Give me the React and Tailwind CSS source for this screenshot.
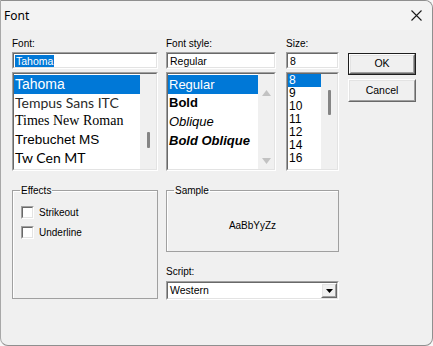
import React from "react";

const outerSunk = "border border-t-[#a0a0a0] border-l-[#a0a0a0] border-r-white border-b-white";
const innerSunk = "border border-t-[#696969] border-l-[#696969] border-r-[#e3e3e3] border-b-[#e3e3e3]";
const outerRaised = "border border-t-white border-l-white border-r-[#696969] border-b-[#696969]";
const innerRaised = "border border-t-[#e3e3e3] border-l-[#e3e3e3] border-r-[#a0a0a0] border-b-[#a0a0a0]";

function Sunken({ className = "", inner = "", children }) {
  return (
    <div className={`${outerSunk} ${className}`}>
      <div className={`${innerSunk} h-full w-full bg-white ${inner}`}>{children}</div>
    </div>
  );
}

function Label({ children }) {
  return <div className="h-[13px] text-[10px] leading-[13px] text-black">{children}</div>;
}

function ThinScroll({ top, height }) {
  return (
    <div className="w-[16px] h-full bg-[#f0f0f0] flex flex-col items-center">
      <div style={{ marginTop: top, height }} className="w-[3px] bg-[#858585] rounded-[1px]" />
    </div>
  );
}

function Checkbox({ label }) {
  return (
    <div className="flex items-center h-[16px]">
      <div className={`${outerSunk} w-[13px] h-[13px]`}>
        <div className={`${innerSunk} w-full h-full bg-white`} />
      </div>
      <span className="ml-[5px] text-[10px] leading-[13px]">{label}</span>
    </div>
  );
}

export default function App() {
  const fonts = [
    { name: "Tahoma", cls: "font-['Liberation_Sans',sans-serif] text-[14px]", sel: true },
    { name: "Tempus Sans ITC", cls: "font-['Lato',sans-serif] text-[14px] text-[#2a2a2a]" },
    { name: "Times New Roman", cls: "font-['Liberation_Serif',serif] text-[14px]" },
    { name: "Trebuchet MS", cls: "font-['Liberation_Sans',sans-serif] text-[13.5px]" },
    { name: "Tw Cen MT", cls: "font-['Lato',sans-serif] text-[14px]" },
  ];
  const styles = [
    { name: "Regular", cls: "", sel: true },
    { name: "Bold", cls: "font-bold" },
    { name: "Oblique", cls: "italic" },
    { name: "Bold Oblique", cls: "font-bold italic" },
  ];
  const sizes = ["8", "9", "10", "11", "12", "14", "16"];

  return (
    <div className="w-[433px] h-[346px] bg-[#f7f7f7] font-['Liberation_Sans',Arial,sans-serif] text-black">
      <div className="w-[433px] h-[346px] bg-[#f0f0f0] border border-[#8f8f8f] border-l-[#a8a8a8] rounded-tr-[8px] rounded-b-[8px] flex flex-col overflow-hidden">
        {/* Title bar */}
        <div className="h-[29px] shrink-0 flex items-center justify-between pl-[3px] pr-[10px] bg-[#f3f3f3]">
          <span className="font-['Noto_Sans',sans-serif] text-[12px] leading-[16px] text-black">Font</span>
          <svg width="11" height="11" viewBox="0 0 11 11">
            <path d="M0.5 0.5 L10.5 10.5 M10.5 0.5 L0.5 10.5" stroke="#1a1a1a" strokeWidth="1.1" />
          </svg>
        </div>

        {/* Body */}
        <div className="flex-1 flex flex-col pl-[11px] pt-[7px]">
          {/* Top row */}
          <div className="flex">
            {/* Font column */}
            <div className="w-[146px] flex flex-col">
              <Label>Font:</Label>
              <Sunken className="mt-[2px] h-[17px]" inner="flex items-center pl-[1px]">
                <span className="bg-[#0078d7] text-white text-[10.5px] leading-[12px] px-[1px]">Tahoma</span>
              </Sunken>
              <Sunken className="mt-[3px] h-[99px]" inner="flex overflow-hidden">
                <div className="flex-1 pt-[1px] flex flex-col">
                  {fonts.map((f) => (
                    <div
                      key={f.name}
                      className={`h-[18.5px] shrink-0 flex items-center pl-[1px] leading-[18px] whitespace-nowrap ${f.cls} ${f.sel ? "bg-[#0078d7] text-white" : ""}`}
                    >
                      {f.name}
                    </div>
                  ))}
                </div>
                <ThinScroll top={58} height={16} />
              </Sunken>
            </div>

            {/* Font style column */}
            <div className="w-[110px] ml-[8px] flex flex-col">
              <Label>Font style:</Label>
              <Sunken className="mt-[2px] h-[17px]" inner="flex items-center pl-[2px]">
                <span className="text-[10.5px] leading-[12px]">Regular</span>
              </Sunken>
              <Sunken className="mt-[3px] h-[99px]" inner="flex overflow-hidden">
                <div className="flex-1 pt-[1px] flex flex-col">
                  {styles.map((s) => (
                    <div
                      key={s.name}
                      className={`h-[18.75px] shrink-0 flex items-center pl-[1px] text-[13px] font-['Liberation_Sans',sans-serif] whitespace-nowrap ${s.cls} ${s.sel ? "bg-[#0078d7] text-white" : ""}`}
                    >
                      {s.name}
                    </div>
                  ))}
                </div>
                <div className="w-[16px] h-full bg-[#f0f0f0] flex flex-col items-center">
                  <svg width="9" height="6" viewBox="0 0 9 6" className="mt-[16px]">
                    <path d="M0 6 L4.5 0 L9 6 Z" fill="#c2c2c2" />
                  </svg>
                  <svg width="9" height="6" viewBox="0 0 9 6" className="mt-[62px]">
                    <path d="M0 0 L9 0 L4.5 6 Z" fill="#c2c2c2" />
                  </svg>
                </div>
              </Sunken>
            </div>

            {/* Size column */}
            <div className="w-[53px] ml-[10px] flex flex-col">
              <Label>Size:</Label>
              <Sunken className="mt-[2px] h-[17px]" inner="flex items-center pl-[2px]">
                <span className="text-[10.5px] leading-[12px]">8</span>
              </Sunken>
              <Sunken className="mt-[3px] h-[99px]" inner="flex overflow-hidden">
                <div className="flex-1 flex flex-col">
                  {sizes.map((s, i) => (
                    <div
                      key={s}
                      className={`h-[13px] shrink-0 flex items-center pl-[1px] text-[12px] leading-[13px] ${i === 0 ? "bg-[#0078d7] text-white" : ""}`}
                    >
                      {s}
                    </div>
                  ))}
                </div>
                <ThinScroll top={16} height={25} />
              </Sunken>
            </div>

            {/* Buttons */}
            <div className="w-[68px] ml-[9px] pt-[16px] flex flex-col">
              <div className="h-[22px] border border-[#1e1e1e]">
                <div className={`${outerRaised} h-full w-full`}>
                  <div className={`${innerRaised} h-full w-full bg-[#f0f0f0] flex items-center justify-center text-[10.5px]`}>OK</div>
                </div>
              </div>
              <div className={`${outerRaised} mt-[4px] h-[23px]`}>
                <div className={`${innerRaised} h-full w-full bg-[#f0f0f0] flex items-center justify-center text-[10.5px]`}>Cancel</div>
              </div>
            </div>
          </div>

          {/* Bottom row */}
          <div className="flex mt-[13px]">
            <fieldset className="w-[146px] h-[115px] border border-[#a0a0a0] shadow-[inset_1px_1px_0_#ffffff] pl-[8px] pt-[7px]">
              <legend className="-ml-px px-[1px] text-[10px] leading-[13px]">Effects</legend>
              <Checkbox label="Strikeout" />
              <div className="mt-[4px]">
                <Checkbox label="Underline" />
              </div>
            </fieldset>

            <div className="w-[173px] ml-[8px] flex flex-col">
              <fieldset className="h-[68px] border border-[#a0a0a0] shadow-[inset_1px_1px_0_#ffffff]">
                <legend className="ml-[7px] px-[1px] text-[10px] leading-[13px]">Sample</legend>
                <div className="w-full text-center pt-[22px] text-[10px] leading-[13px]">AaBbYyZz</div>
              </fieldset>
              <div className="mt-[13px]">
                <Label>Script:</Label>
              </div>
              <Sunken className="mt-[3px] h-[19px]" inner="flex items-center">
                <span className="flex-1 pl-[2px] text-[10.5px] leading-[13px]">Western</span>
                <div className={`${outerRaised} w-[16px] h-[15px]`}>
                  <div className={`${innerRaised} w-full h-full bg-[#f0f0f0] flex items-center justify-center`}>
                    <svg width="7" height="4" viewBox="0 0 7 4">
                      <path d="M0 0 L7 0 L3.5 4 Z" fill="#000" />
                    </svg>
                  </div>
                </div>
              </Sunken>
            </div>
          </div>
        </div>
      </div>
    </div>
  );
}
